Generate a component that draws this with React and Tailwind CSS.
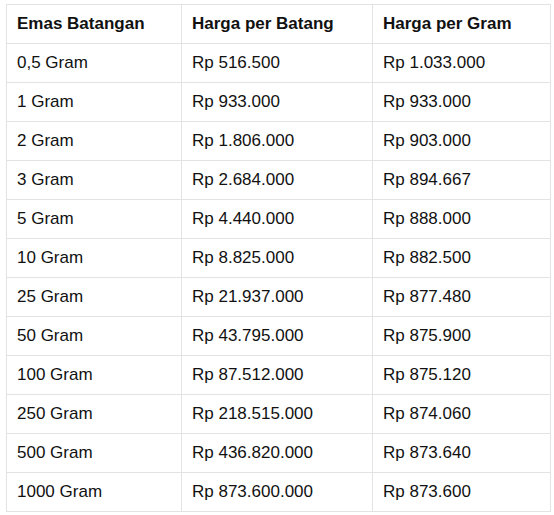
import React from "react";

const rows = [
  ["0,5 Gram", "Rp 516.500", "Rp 1.033.000"],
  ["1 Gram", "Rp 933.000", "Rp 933.000"],
  ["2 Gram", "Rp 1.806.000", "Rp 903.000"],
  ["3 Gram", "Rp 2.684.000", "Rp 894.667"],
  ["5 Gram", "Rp 4.440.000", "Rp 888.000"],
  ["10 Gram", "Rp 8.825.000", "Rp 882.500"],
  ["25 Gram", "Rp 21.937.000", "Rp 877.480"],
  ["50 Gram", "Rp 43.795.000", "Rp 875.900"],
  ["100 Gram", "Rp 87.512.000", "Rp 875.120"],
  ["250 Gram", "Rp 218.515.000", "Rp 874.060"],
  ["500 Gram", "Rp 436.820.000", "Rp 873.640"],
  ["1000 Gram", "Rp 873.600.000", "Rp 873.600"],
];

const cell = "border border-[#e3e3e3] h-[39px] px-[10px] text-left align-middle";

const App = () => {
  return (
    <div
      className="w-[554px] h-[515px] bg-white pt-[4px] pl-[6px]"
      style={{ fontFamily: '"Liberation Sans", Arial, sans-serif' }}
    >
      <table className="border-collapse table-fixed w-[544px] text-[17px] text-[#111]">
        <colgroup>
          <col className="w-[175px]" />
          <col className="w-[191px]" />
          <col className="w-[178px]" />
        </colgroup>
        <thead>
          <tr>
            <th className={cell + " font-bold"}>Emas Batangan</th>
            <th className={cell + " font-bold"}>Harga per Batang</th>
            <th className={cell + " font-bold"}>Harga per Gram</th>
          </tr>
        </thead>
        <tbody>
          {rows.map((r) => (
            <tr key={r[0]}>
              {r.map((c, i) => (
                <td key={i} className={cell}>
                  {c}
                </td>
              ))}
            </tr>
          ))}
        </tbody>
      </table>
    </div>
  );
};

export default App;
